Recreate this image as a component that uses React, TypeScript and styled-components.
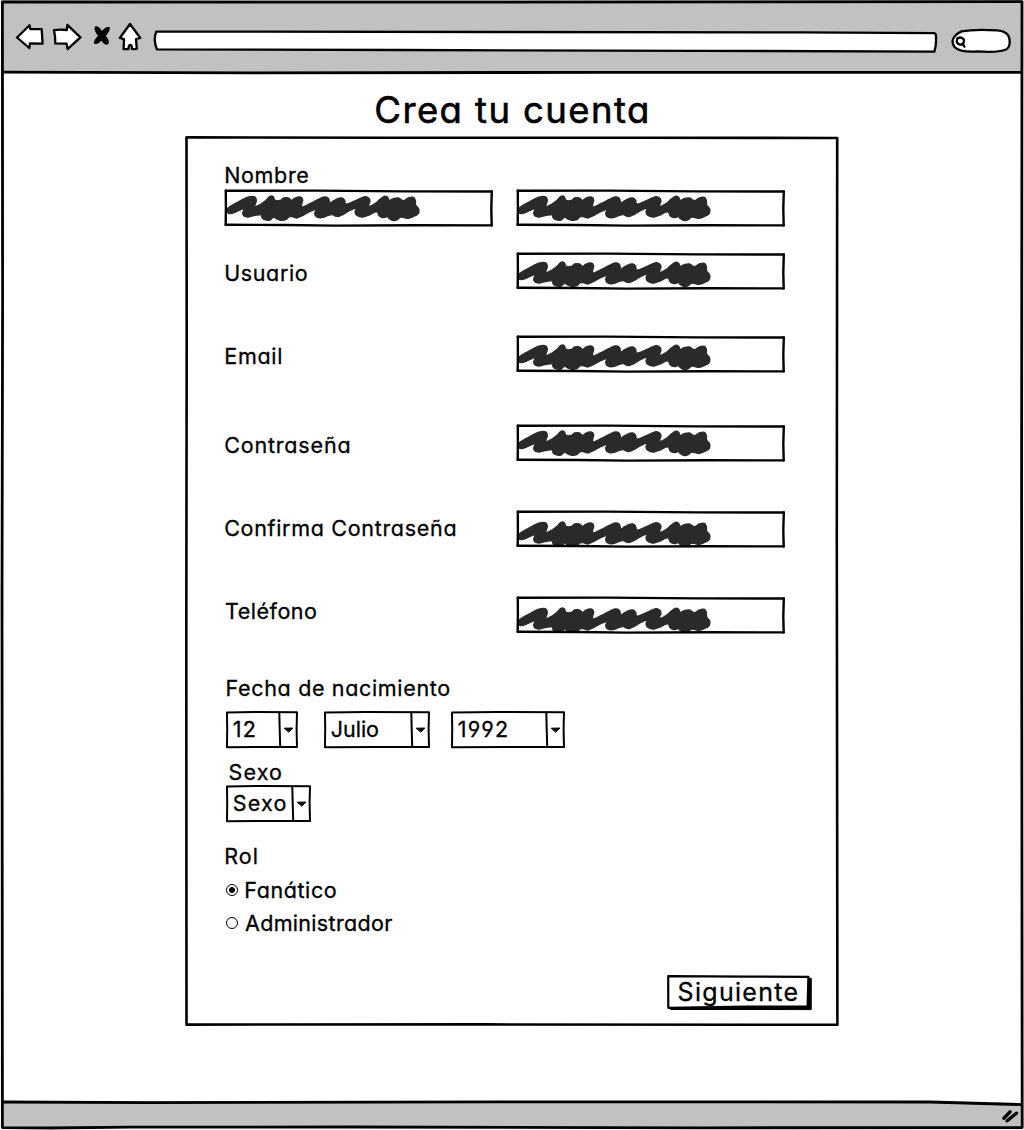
import React from "react";
import styled, { createGlobalStyle } from "styled-components";

const INK = "#000";
const SCRIBBLE = "#2a2a2a";
const CHROME = "#c1c1c1";

const GlobalStyle = createGlobalStyle`
  * { box-sizing: border-box; }
  body {
    margin: 0;
    background: #fff;
    color: ${INK};
    font-family: Inter, "Open Sans", sans-serif;
    font-feature-settings: "cv11", "ss01";
  }
`;

const Browser = styled.div`
  position: relative;
  display: flex;
  flex-direction: column;
  width: 1024px;
  height: 1130px;
  overflow: hidden;
`;

const Overlay = styled.svg`
  position: absolute;
  inset: 0;
  width: 100%;
  height: 100%;
  overflow: visible;
  pointer-events: none;
  fill: none;
  stroke: ${INK};
  stroke-linejoin: round;
  stroke-linecap: round;
`;

const Toolbar = styled.header`
  display: flex;
  align-items: flex-start;
  height: 73px;
  margin: 0 2px;
  padding: 20px 0 0 13px;
  background: ${CHROME};
`;

const ToolIcon = styled.svg<{ $gap?: number }>`
  flex: none;
  display: block;
  margin-left: ${(p) => p.$gap ?? 0}px;
  fill: #fff;
  stroke: ${INK};
  stroke-width: 2.3;
  stroke-linejoin: round;
  stroke-linecap: round;
`;

const Page = styled.main`
  flex: 1;
`;

const StatusBar = styled.footer`
  display: flex;
  justify-content: flex-end;
  height: 27px;
  margin: 0 2px 2px;
  padding: 6px 1px 0 0;
  background: ${CHROME};
  clip-path: polygon(0 0, 91% 0, 100% 2px, 100% 100%, 0 100%);
`;

const Text = styled.span<{ $track?: number; $drop?: number; $shift?: number; $size?: number }>`
  display: block;
  font-size: ${(p) => p.$size ?? 21.5}px;
  line-height: 26px;
  letter-spacing: ${(p) => p.$track ?? 0.7}px;
  margin-top: ${(p) => (p.$drop ?? 0) * 2}px;
  margin-left: ${(p) => p.$shift ?? -0.8}px;
  white-space: nowrap;
  -webkit-text-stroke: 0.3px ${INK};
`;

const Title = styled.h1`
  margin: 15px 0 5px;
  font-size: 36.5px;
  line-height: 44px;
  font-weight: 400;
  letter-spacing: 1.4px;
  text-align: center;
  text-indent: 1px;
  -webkit-text-stroke: 0.6px ${INK};
`;

const Card = styled.section`
  position: relative;
  width: 652px;
  height: 888px;
  margin: 0 auto;
  padding: 25px 26px 0 39px;
`;

const Row = styled.div<{ $top: number }>`
  display: grid;
  grid-template-columns: 291.5px 268px;
  align-items: center;
  height: 36px;
  margin-top: ${(p) => p.$top}px;
`;

const Line = styled.div<{ $top: number }>`
  display: flex;
  align-items: center;
  margin-top: ${(p) => p.$top}px;
`;

const Field = styled.div`
  position: relative;
  width: 268px;
  height: 36px;
`;

const ScribbleDrawing = styled.svg<{ $drop: number }>`
  display: block;
  margin: ${(p) => p.$drop}px 0 0 -0.5px;
  overflow: visible;
  fill: ${SCRIBBLE};
  stroke: ${SCRIBBLE};
  stroke-width: 4;
  stroke-linejoin: round;
`;

const Select = styled.div<{ $width: number; $gap?: number }>`
  position: relative;
  display: flex;
  align-items: center;
  width: ${(p) => p.$width}px;
  height: 37px;
  padding: 0 0 2px 7px;
  margin-left: ${(p) => p.$gap ?? 1}px;
`;

const Radio = styled.span<{ $on?: boolean }>`
  flex: none;
  width: 12px;
  height: 12px;
  margin: -1px 0 0 1px;
  border: 1.3px solid ${INK};
  border-radius: 50%;
  background: ${(p) => (p.$on ? `radial-gradient(circle, ${INK} 2.6px, transparent 3.3px)` : "#fff")};
`;

const Actions = styled.div`
  display: flex;
  justify-content: flex-end;
  margin-top: 39px;
`;

const NextButton = styled.div`
  position: relative;
  display: flex;
  align-items: center;
  width: 145px;
  height: 36px;
  padding: 0 0 3px 10px;
`;

const ButtonText = styled(Text)`
  position: relative;
`;

const scribbleOutline: [number, number][] = [
  [35, 75], [42, 67], [60, 56], [85, 42], [105, 35], [120, 36], [124, 46], [121, 57], [118, 65], [135, 59],
  [155, 44], [165, 34], [175, 35], [180, 46], [196, 46], [206, 39], [220, 39], [230, 46], [240, 39], [255, 36],
  [263, 44], [260, 58], [262, 66], [285, 56], [310, 43], [328, 36], [339, 39], [343, 48], [342, 55], [352, 50],
  [365, 42], [380, 39], [389, 46], [392, 57], [410, 52], [430, 43], [450, 35], [461, 39], [465, 48], [461, 60],
  [464, 64], [480, 56], [495, 43], [508, 34], [518, 37], [523, 46], [535, 41], [550, 39], [565, 47], [580, 39],
  [595, 37], [601, 46], [602, 60], [611, 72], [610, 85], [599, 93], [580, 100], [565, 97], [555, 97], [547, 104],
  [535, 107], [523, 101], [517, 95], [505, 98], [493, 93], [487, 81], [478, 82], [462, 90], [440, 96], [425, 91],
  [420, 80], [424, 69], [405, 76], [385, 88], [368, 95], [352, 89], [340, 91], [320, 98], [304, 95], [299, 85],
  [303, 73], [280, 82], [262, 92], [245, 99], [232, 95], [222, 96], [212, 104], [198, 106], [185, 102], [176, 96],
  [165, 105], [149, 104], [141, 98], [139, 90], [125, 90], [100, 96], [87, 93], [83, 84], [86, 71], [60, 82],
  [45, 86], [38, 83],
];

const smoothClosed = (pts: [number, number][]) => {
  const n = pts.length;
  const at = (i: number) => pts[(i + n) % n];
  let d = `M${at(0)[0]} ${at(0)[1]}`;
  for (let i = 0; i < n; i++) {
    const [a, b, c, e] = [at(i - 1), at(i), at(i + 1), at(i + 2)];
    d += `C${b[0] + (c[0] - a[0]) / 6} ${b[1] + (c[1] - a[1]) / 6} ${c[0] - (e[0] - b[0]) / 6} ${c[1] - (e[1] - b[1]) / 6} ${c[0]} ${c[1]}`;
  }
  return d + "Z";
};

const scribblePath = smoothClosed(scribbleOutline);

function ScribbledField({ drop = 0 }: { drop?: number }) {
  return (
    <Field>
      <Overlay strokeWidth="2.4">
        <path d="M.8 .8 L90 .6 L180 1.4 L266.8 1.5" />
        <path d="M.8 .8 L.9 18 L.7 34.8" />
        <path d="M.7 34.8 L60 35 L110 35.6 L190 35.2 L266.6 35.4" />
        <path d="M266.8 1.5 L266.3 19 L266.7 35.4" />
      </Overlay>
      <ScribbleDrawing $drop={drop} width="200" height="36" viewBox="30 15 600 108">
        <path d={scribblePath} />
      </ScribbleDrawing>
    </Field>
  );
}

type DropdownProps = { label: string; width: number; gap?: number; track?: number };

function Dropdown({ label, width, gap, track }: DropdownProps) {
  const r = width - 1;
  const s = width - 18.7;
  return (
    <Select $width={width} $gap={gap}>
      <Overlay strokeWidth="2">
        <path d={`M1 1.5 L${width * 0.4} .9 L${r} 1.3 L${r - 0.4} 18 L${r} 36 L${width * 0.5} 36 L1 36.3 L1.2 18 Z`} />
        <path d={`M${s} 1.5 L${s + 0.4} 18 L${s + 0.9} 36`} />
        <path d={`M${width - 13.4} 17.2 L${width - 5.2} 17 L${width - 9} 21 Z`} fill={INK} strokeWidth="1" />
      </Overlay>
      <Text $track={track} $shift={-0.3}>{label}</Text>
    </Select>
  );
}

function BrowserToolbar() {
  return (
    <Toolbar>
      <ToolIcon width="30" height="36" viewBox="15 20 30 36">
        <path d="M17 37.5 L29.5 25.3 L30.3 29 L41.7 29.2 L42.6 43.6 L30 43.3 L29.3 48 Z" />
      </ToolIcon>
      <ToolIcon width="30" height="36" viewBox="52 20 30 36" $gap={7}>
        <path d="M54 30.2 Q60 29 66.8 30 L67.4 24.8 L80.4 37.3 L67.6 49.2 L66.6 43.6 L55.2 43.4 Q55.4 36 54 30.2 Z" />
      </ToolIcon>
      <ToolIcon width="20" height="36" viewBox="92 20 20 36" $gap={10}>
        <path d="M95.4 27 Q98.6 26.2 102 32.4 Q104.6 27.4 109.2 27.6 Q109.4 31 104.8 36 Q108.8 40 108 43.4 Q104.6 45.6 101.4 39.4 Q98 44 94.6 43.2 Q94.4 40.4 99 35.8 Q94.4 31 95.4 27 Z" fill={INK} strokeWidth="1.4" />
      </ToolIcon>
      <ToolIcon width="24" height="36" viewBox="118 20 24 36" $gap={6}>
        <path d="M130 24 L140.3 38 L136 39 L136.8 48.8 L132 49.2 Q132 45 130 45 Q128.5 45 128.6 49 L123.6 49.2 L124 39.2 L119.8 38 Z" />
      </ToolIcon>
      <ToolIcon width="788" height="36" viewBox="151 20 788 36" $gap={9}>
        <path d="M156.2 31.6 L500 32 L800 32.4 L934 33.2 Q936.4 33.4 936 38 Q936.4 45 934.4 51.6 L700 50.8 L400 50 L157 49.4 Q153 41 156.2 31.6 Z" />
      </ToolIcon>
      <ToolIcon width="64" height="36" viewBox="950.5 20 64 36" $gap={11}>
        <path d="M962 31.4 Q975 28.8 998 30.4 Q1009 31.5 1010 39 Q1011 47 1007 49.2 Q998 53 978 51.4 Q960 52.5 955 47 Q949 38 962 31.4 Z" />
        <path d="M957.8 38.6 Q962 36 964.4 39.6 Q965 44.4 960.6 44.6 Q955.8 43.4 957.8 38.6 Z M963 43.6 L965 46.6" />
      </ToolIcon>
    </Toolbar>
  );
}

export default function App() {
  return (
    <>
      <GlobalStyle />
      <Browser>
        <BrowserToolbar />
        <Page>
          <Title>Crea tu cuenta</Title>
          <Card>
            <Overlay strokeWidth="2.6">
              <path d="M.5 .4 L200 .8 L450 .7 L651.2 1 L650.8 400 L651.4 887.8 L300 887.4 L.5 887.6 L.3 500 L.7 200 Z" />
            </Overlay>
            <Text $track={0.66}>Nombre</Text>
            <Row $top={2}>
              <ScribbledField drop={0.3} />
              <ScribbledField drop={0.3} />
            </Row>
            <Row $top={27}>
              <Text $track={0.62} $drop={2}>Usuario</Text>
              <ScribbledField drop={2.8} />
            </Row>
            <Row $top={47}>
              <Text $track={0.75} $drop={2}>Email</Text>
              <ScribbledField drop={2.8} />
            </Row>
            <Row $top={53}>
              <Text $track={0.82} $drop={2}>Contraseña</Text>
              <ScribbledField drop={0} />
            </Row>
            <Row $top={50}>
              <Text $track={0.69} $drop={-1}>Confirma Contraseña</Text>
              <ScribbledField drop={4.7} />
            </Row>
            <Row $top={50}>
              <Text $track={0.53} $drop={-4} $shift={0}>Teléfono</Text>
              <ScribbledField drop={4.7} />
            </Row>
            <Line $top={42}>
              <Text $track={0.66} $shift={0.6}>Fecha de nacimiento</Text>
            </Line>
            <Line $top={10}>
              <Dropdown label="12" width={72} track={1.4} />
              <Dropdown label="Julio" width={106} gap={26} track={0} />
              <Dropdown label="1992" width={114} gap={21} track={1.2} />
            </Line>
            <Line $top={11}>
              <Text $track={1.2} $shift={3.4}>Sexo</Text>
            </Line>
            <Line $top={0}>
              <Dropdown label="Sexo" width={85} track={1.2} />
            </Line>
            <Line $top={21}>
              <Text $track={1.1}>Rol</Text>
            </Line>
            <Line $top={8}>
              <Radio $on />
              <Text $track={0.6} $shift={6.2}>Fanático</Text>
            </Line>
            <Line $top={7}>
              <Radio />
              <Text $track={0.32} $shift={7}>Administrador</Text>
            </Line>
            <Actions>
              <NextButton>
                <Overlay>
                  <path d="M4 3.5 L144.3 3.3 L144.2 34.6 L4 34.4 Z" fill={INK} strokeWidth="1" />
                  <path d="M1.2 1.2 L80 1.6 L141.4 1.8 L140.6 31.4 L80 31.6 L1.3 32.8 Z" fill="#fff" strokeWidth="2.2" />
                </Overlay>
                <ButtonText $size={25} $track={1.3} $shift={0.6}>Siguiente</ButtonText>
              </NextButton>
            </Actions>
          </Card>
        </Page>
        <StatusBar>
          <ToolIcon width="20" height="18" viewBox="1001 1108 20 18">
            <path d="M1004 1119.2 L1010 1112.8 M1007.2 1121.8 L1016.4 1114.2" strokeWidth="3.4" />
          </ToolIcon>
        </StatusBar>
        <Overlay strokeWidth="2.8">
          <path d="M2.4 1.8 L400 2.2 L1022 1.6 L1021.6 500 L1022.2 1127.6 L700 1127.8 L350 1127 L130 1127.2 L50 1128 L2.4 1127.6 L2 600 L2.6 300 Z" />
          <path d="M3 72.2 L250 72.8 L600 72.4 L1021 72.4" />
          <path d="M3 1102 L150 1102.6 L500 1101.8 L930 1102 L1021 1104.6" />
        </Overlay>
      </Browser>
    </>
  );
}
